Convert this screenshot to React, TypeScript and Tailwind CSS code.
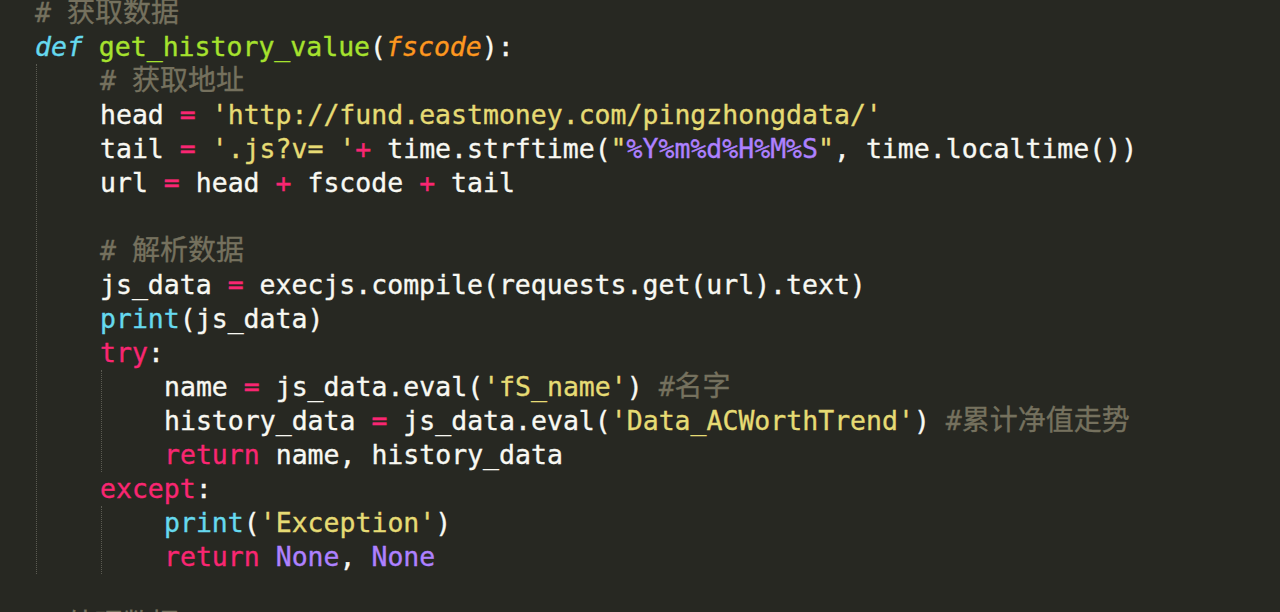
const C = { comment: "text-[#75715E]", kw: "text-[#F92672]", fn: "text-[#A6E22E]", sup: "text-[#66D9EF]", arg: "text-[#FD971F] italic", str: "text-[#E6DB74]", num: "text-[#AE81FF]", txt: "text-[#F8F8F2]" };

type Tok = [string, string?];

// 中文用更宽一点的字号，和截图里的全角宽度对齐；行高置零免得把整行往下推
const Cjk = ({ children }: { children: string }) => (
  <span className="font-['Noto_Sans_CJK_SC',sans-serif] text-[28px] leading-[0px]">{children}</span>
);

const Comment = ({ hash, text }: { hash: string; text: string }) => (
  <div className={`h-[34px] leading-[34px] whitespace-pre ${C.comment}`}>
    {hash}
    <Cjk>{text}</Cjk>
  </div>
);

const Line = ({ toks }: { toks: Tok[] }) => (
  <div className="h-[34px] leading-[34px] whitespace-pre">
    {toks.map(([t, cls], i) => (
      <span key={i} className={cls ?? C.txt}>
        {t}
      </span>
    ))}
  </div>
);

const Blank = () => <div className="h-[34px]" />;

const Guide = ({ className, children }: { className: string; children: React.ReactNode }) => (
  <div className={`border-l border-dotted border-[#5b5b52] ${className}`}>{children}</div>
);

export default function App() {
  return (
    <div className="w-[1280px] h-[612px] overflow-hidden bg-[#272822] font-['DejaVu_Sans_Mono','Noto_Sans_CJK_SC',monospace] text-[26.5px] text-[#F8F8F2] [-webkit-text-stroke:0.35px]">
      <div className="mt-[-4px]">
        <div className="pl-[35px]">
          <Comment hash="# " text="获取数据" />
          <Line
            toks={[
              ["def", `${C.sup} italic`],
              [" "],
              ["get_history_value", C.fn],
              ["("],
              ["fscode", C.arg],
              ["):"],
            ]}
          />
        </div>

        <Guide className="ml-[36px] pl-[63px]">
          <Comment hash="# " text="获取地址" />
          <Line toks={[["head "], ["=", C.kw], [" "], ["'http://fund.eastmoney.com/pingzhongdata/'", C.str]]} />
          <Line
            toks={[
              ["tail "],
              ["=", C.kw],
              [" "],
              ["'.js?v= '", C.str],
              ["+", C.kw],
              [" time.strftime("],
              ['"', C.str],
              ["%Y%m%d%H%M%S", C.num],
              ['"', C.str],
              [", time.localtime())"],
            ]}
          />
          <Line toks={[["url "], ["=", C.kw], [" head "], ["+", C.kw], [" fscode "], ["+", C.kw], [" tail"]]} />
          <Blank />
          <Comment hash="# " text="解析数据" />
          <Line toks={[["js_data "], ["=", C.kw], [" execjs.compile(requests.get(url).text)"]]} />
          <Line toks={[["print", C.sup], ["(js_data)"]]} />
          <Line toks={[["try", C.kw], [":"]]} />

          <Guide className="ml-[1px] pl-[62px]">
            <div className="h-[34px] leading-[34px] whitespace-pre">
              <span>name </span>
              <span className={C.kw}>=</span>
              <span> js_data.eval(</span>
              <span className={C.str}>'fS_name'</span>
              <span>) </span>
              <span className={C.comment}>
                #<Cjk>名字</Cjk>
              </span>
            </div>
            <div className="h-[34px] leading-[34px] whitespace-pre">
              <span>history_data </span>
              <span className={C.kw}>=</span>
              <span> js_data.eval(</span>
              <span className={C.str}>'Data_ACWorthTrend'</span>
              <span>) </span>
              <span className={C.comment}>
                #<Cjk>累计净值走势</Cjk>
              </span>
            </div>
            <Line toks={[["return", C.kw], [" name, history_data"]]} />
          </Guide>

          <Line toks={[["except", C.kw], [":"]]} />

          <Guide className="ml-[1px] pl-[62px]">
            <Line toks={[["print", C.sup], ["("], ["'Exception'", C.str], [")"]]} />
            <Line toks={[["return", C.kw], [" "], ["None", C.num], [", "], ["None", C.num]]} />
          </Guide>
        </Guide>

        <div className="pl-[35px]">
          <Blank />
          <Comment hash="# " text="处理数据" />
        </div>
      </div>
    </div>
  );
}
